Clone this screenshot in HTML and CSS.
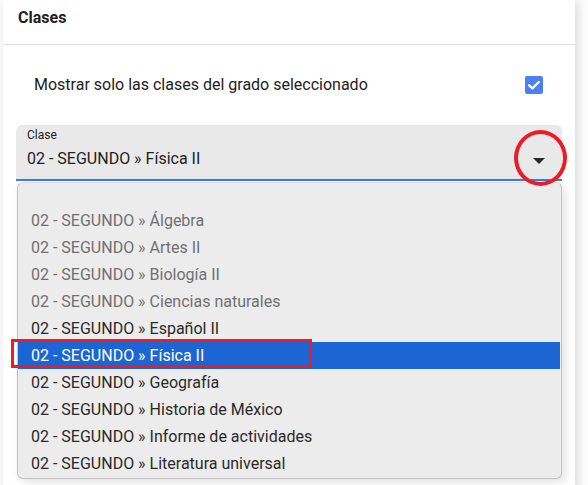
FILE: index.html
```html
<!DOCTYPE html>
<html lang="es">
<head>
<meta charset="utf-8">
<link rel="stylesheet" href="styles.css">
</head>
<body>
<div class="page">
  <div class="card">
    <div class="card-header">Clases</div>
    <div class="card-body">
      <div class="check-row">
        <span class="check-label">Mostrar solo las clases del grado seleccionado</span>
        <span class="checkbox">
          <svg width="18" height="18" viewBox="0 0 18 18"><rect x="0" y="0" width="18" height="18" rx="2" fill="#4c7ff5"/><path d="M4.2 9.3 L7.4 12.3 L13.8 6" fill="none" stroke="#fff" stroke-width="2.4" stroke-linecap="round" stroke-linejoin="round"/></svg>
        </span>
      </div>
      <div class="select-wrap">
        <div class="select">
          <div class="select-text">
            <div class="select-label">Clase</div>
            <div class="select-value">02 - SEGUNDO » Física II</div>
          </div>
          <span class="arrow"></span>
        </div>
        <ul class="menu">
          <li class="item muted">02 - SEGUNDO » Álgebra</li>
          <li class="item muted">02 - SEGUNDO » Artes II</li>
          <li class="item muted">02 - SEGUNDO » Biología II</li>
          <li class="item muted">02 - SEGUNDO » Ciencias naturales</li>
          <li class="item">02 - SEGUNDO » Español II</li>
          <li class="item active">02 - SEGUNDO » Física II</li>
          <li class="item">02 - SEGUNDO » Geografía</li>
          <li class="item">02 - SEGUNDO » Historia de México</li>
          <li class="item">02 - SEGUNDO » Informe de actividades</li>
          <li class="item">02 - SEGUNDO » Literatura universal</li>
        </ul>
        <span class="mark-ellipse"></span>
        <span class="mark-rect"></span>
      </div>
    </div>
  </div>
</div>
</body>
</html>
```

FILE: styles.css
```css
* { box-sizing: border-box; }
html, body { margin: 0; padding: 0; background: #ffffff; }
body { font-family: Roboto, "Liberation Sans", sans-serif; color: #222; }
.page {
  width: 588px;
  height: 485px;
  overflow: hidden;
  padding-left: 3px;
}
.card {
  width: 572px;
  height: 520px;
  background: #fff;
  box-shadow: 3px 0 12px rgba(0,0,0,0.16);
}
.card-header {
  height: 45px;
  padding: 8px 0 0 15px;
  font-size: 16px;
  font-weight: 700;
  line-height: 20px;
  color: #222;
  border-bottom: 1px solid #e2e2e2;
}
.card-body { padding: 28px 0 0 13px; }
.check-row {
  display: flex;
  align-items: center;
  justify-content: space-between;
  height: 24px;
  padding: 0 32px 0 18px;
}
.check-label { font-size: 16px; color: #222; line-height: 24px; }
.checkbox { display: flex; width: 18px; height: 18px; }
.select-wrap { position: relative; margin-top: 28px; width: 546px; }
.select {
  height: 56px;
  background: #e9e9e9;
  border-radius: 6px 6px 0 0;
  border-bottom: 2px solid #3f7ae8;
  display: flex;
  align-items: flex-start;
  justify-content: space-between;
  padding: 3px 17px 0 11px;
}
.select-label { font-size: 12px; line-height: 15px; color: #222; }
.select-value { font-size: 16px; line-height: 20px; color: #222; margin-top: 6px; }
.arrow {
  margin-top: 30px;
  width: 0; height: 0;
  border-left: 6px solid transparent;
  border-right: 6px solid transparent;
  border-top: 6px solid #2a2a2a;
}
.menu {
  position: absolute;
  left: 1px;
  top: 57px;
  width: 545px;
  margin: 0;
  padding: 24px 0 1px 0;
  list-style: none;
  background: #ececec;
  border: 1px solid #c4c4c4;
  border-top-color: #dcdcdc;
  border-radius: 6px;
  box-shadow: 3px 3px 10px rgba(0,0,0,0.12);
}
.item {
  height: 27px;
  line-height: 27px;
  font-size: 16px;
  padding-left: 13px;
  color: #2a2a2a;
  white-space: nowrap;
}
.item.muted { color: #707070; }
.item.active { background: #1b66d3; color: #fff; margin-right: 1px; }
.mark-ellipse {
  position: absolute;
  left: 498px;
  top: 5px;
  width: 53px;
  height: 56px;
  border: 4px solid #ec1c24;
  border-radius: 50%;
}
.mark-rect {
  position: absolute;
  left: -5px;
  top: 214px;
  width: 301px;
  height: 29px;
  border: 3px solid #ec1c24;
}
```
